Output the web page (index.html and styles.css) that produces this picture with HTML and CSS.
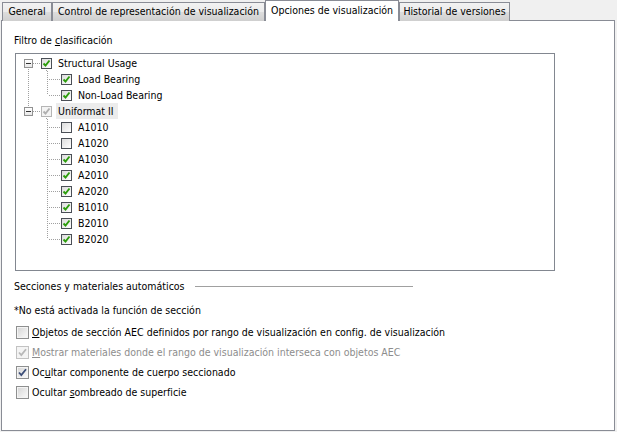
FILE: index.html
```html
<!DOCTYPE html>
<html lang="es">
<head>
<meta charset="utf-8">
<link rel="stylesheet" href="styles.css">
</head>
<body>
<div class="window">
  <div class="tabs">
    <div class="tab t-general">General</div>
    <div class="tab t-control">Control de representación de visualización</div>
    <div class="tab t-opciones active">Opciones de visualización</div>
    <div class="tab t-historial">Historial de versiones</div>
  </div>
  <div class="panel">
    <div class="caption">Filtro de <u>c</u>lasificación</div>
    <div class="tree">
      <div class="row root first">
        <span class="gutter"><span class="exp"></span></span>
        <span class="tcb on haskids"><svg viewBox="0 0 9 9"><path d="M1.5 4.5 L3.5 6.5 L7.5 1.5"/></svg></span>
        <span class="ttext">Structural Usage</span>
      </div>
      <div class="row child cont">
        <span class="gutter"></span>
        <span class="branch"></span>
        <span class="tcb on"><svg viewBox="0 0 9 9"><path d="M1.5 4.5 L3.5 6.5 L7.5 1.5"/></svg></span>
        <span class="ttext">Load Bearing</span>
      </div>
      <div class="row child cont last">
        <span class="gutter"></span>
        <span class="branch"></span>
        <span class="tcb on"><svg viewBox="0 0 9 9"><path d="M1.5 4.5 L3.5 6.5 L7.5 1.5"/></svg></span>
        <span class="ttext">Non-Load Bearing</span>
      </div>
      <div class="row root lastroot">
        <span class="gutter"><span class="exp"></span></span>
        <span class="tcb on dis haskids"><svg viewBox="0 0 9 9"><path d="M1.5 4.5 L3.5 6.5 L7.5 1.5"/></svg></span>
        <span class="ttext sel">Uniformat II</span>
      </div>
      <div class="row child">
        <span class="gutter"></span>
        <span class="branch"></span>
        <span class="tcb"></span>
        <span class="ttext">A1010</span>
      </div>
      <div class="row child">
        <span class="gutter"></span>
        <span class="branch"></span>
        <span class="tcb"></span>
        <span class="ttext">A1020</span>
      </div>
      <div class="row child">
        <span class="gutter"></span>
        <span class="branch"></span>
        <span class="tcb on"><svg viewBox="0 0 9 9"><path d="M1.5 4.5 L3.5 6.5 L7.5 1.5"/></svg></span>
        <span class="ttext">A1030</span>
      </div>
      <div class="row child">
        <span class="gutter"></span>
        <span class="branch"></span>
        <span class="tcb on"><svg viewBox="0 0 9 9"><path d="M1.5 4.5 L3.5 6.5 L7.5 1.5"/></svg></span>
        <span class="ttext">A2010</span>
      </div>
      <div class="row child">
        <span class="gutter"></span>
        <span class="branch"></span>
        <span class="tcb on"><svg viewBox="0 0 9 9"><path d="M1.5 4.5 L3.5 6.5 L7.5 1.5"/></svg></span>
        <span class="ttext">A2020</span>
      </div>
      <div class="row child">
        <span class="gutter"></span>
        <span class="branch"></span>
        <span class="tcb on"><svg viewBox="0 0 9 9"><path d="M1.5 4.5 L3.5 6.5 L7.5 1.5"/></svg></span>
        <span class="ttext">B1010</span>
      </div>
      <div class="row child">
        <span class="gutter"></span>
        <span class="branch"></span>
        <span class="tcb on"><svg viewBox="0 0 9 9"><path d="M1.5 4.5 L3.5 6.5 L7.5 1.5"/></svg></span>
        <span class="ttext">B2010</span>
      </div>
      <div class="row child last">
        <span class="gutter"></span>
        <span class="branch"></span>
        <span class="tcb on"><svg viewBox="0 0 9 9"><path d="M1.5 4.5 L3.5 6.5 L7.5 1.5"/></svg></span>
        <span class="ttext">B2020</span>
      </div>
    </div>

    <div class="group-title">
      <span>Secciones y materiales automáticos</span>
      <span class="rule"></span>
    </div>
    <div class="note">*No está activada la función de sección</div>

    <div class="check">
      <span class="cb"></span>
      <span class="ctext"><u>O</u>bjetos de sección AEC definidos por rango de visualización en config. de visualización</span>
    </div>
    <div class="check disabled">
      <span class="cb on"><svg viewBox="0 0 11 11"><path d="M2 5.5 L4.3 8 L9 2.2"/></svg></span>
      <span class="ctext"><u>M</u>ostrar materiales donde el rango de visualización interseca con objetos AEC</span>
    </div>
    <div class="check">
      <span class="cb on"><svg viewBox="0 0 11 11"><path d="M2 5.5 L4.3 8 L9 2.2"/></svg></span>
      <span class="ctext">Oc<u>u</u>ltar componente de cuerpo seccionado</span>
    </div>
    <div class="check">
      <span class="cb"></span>
      <span class="ctext">Ocultar <u>s</u>ombreado de superficie</span>
    </div>
  </div>
</div>
</body>
</html>
```

FILE: styles.css
```css
* { box-sizing: border-box; }
html, body { margin: 0; padding: 0; }
body {
  background: #f0f0f0;
  font-family: "DejaVu Sans Condensed", "Liberation Sans", sans-serif;
  font-size: 10.5px;
  color: #000;
  width: 617px;
  height: 432px;
  overflow: hidden;
}
u { text-decoration: underline; text-underline-offset: 1px; }

.window {
  display: flex;
  flex-direction: column;
  padding-left: 1px;
}

/* Tabs */
.tabs {
  display: flex;
  align-items: flex-end;
  height: 21px;
  padding-left: 1px;
  margin-bottom: -1px;
  position: relative;
  z-index: 1;
}
.tab {
  height: 19px;
  border: 1px solid #898c95;
  border-bottom: none;
  background: linear-gradient(#f2f2f2, #ebebeb 50%, #dddddd 51%, #cfcfcf);
  text-align: center;
  line-height: 17px;
  white-space: nowrap;
}
.tab.active {
  height: 21px;
  background: #fff;
  line-height: 18px;
}
.t-general { width: 50px; }
.t-control { width: 213px; }
.t-opciones { width: 134px; }
.t-historial { width: 111px; }

/* Panel */
.panel {
  width: 614px;
  height: 411px;
  background: #fff;
  border: 1px solid #898c95;
  padding: 12px 0 0 12px;
  display: flex;
  flex-direction: column;
}
.caption {
  line-height: 14px;
  height: 14px;
}

/* Tree */
.tree {
  margin-top: 6px;
  margin-left: 1px;
  width: 540px;
  height: 218px;
  border: 1px solid #828790;
  padding-top: 1px;
  display: flex;
  flex-direction: column;
}
.row {
  display: flex;
  align-items: center;
  height: 16px;
  position: relative;
}
.gutter {
  width: 25px;
  height: 16px;
  flex: none;
  position: relative;
}
.gutter::before {
  content: "";
  position: absolute;
  left: 12px;
  width: 1px;
  background: repeating-linear-gradient(to bottom, #a0a0a0 0 1px, transparent 1px 2px);
}
.root.first .gutter::before { top: 8px; bottom: 0; }
.root.lastroot .gutter::before { top: 0; height: 8px; }
.child.cont .gutter::before { top: 0; bottom: 0; }
.child:not(.cont) .gutter::before { display: none; }

.exp {
  position: absolute;
  left: 8px;
  top: 4px;
  width: 9px;
  height: 9px;
  border: 1px solid #919191;
  background: linear-gradient(#fff, #e8e8e8);
  z-index: 1;
}
.exp::before {
  content: "";
  position: absolute;
  left: 1px;
  top: 3px;
  width: 5px;
  height: 1px;
  background: #333;
}
.exp::after {
  content: "";
  position: absolute;
  left: 8px;
  top: 3px;
  width: 8px;
  height: 1px;
  background: repeating-linear-gradient(to right, #a0a0a0 0 1px, transparent 1px 2px);
}

.branch {
  width: 20px;
  height: 16px;
  flex: none;
  position: relative;
}
.branch::before {
  content: "";
  position: absolute;
  left: 6px;
  top: 0;
  bottom: 0;
  width: 1px;
  background: repeating-linear-gradient(to bottom, #a0a0a0 0 1px, transparent 1px 2px);
}
.child.last .branch::before { bottom: 8px; }
.branch::after {
  content: "";
  position: absolute;
  left: 7px;
  top: 8px;
  width: 12px;
  height: 1px;
  background: repeating-linear-gradient(to right, transparent 0 1px, #a0a0a0 1px 2px);
}

.tcb {
  width: 11px;
  height: 11px;
  flex: none;
  border: 1px solid #4a4f56;
  background: linear-gradient(135deg, #dcdcdc, #f4f4f4 70%, #fff);
  position: relative;
  display: flex;
  align-items: center;
  justify-content: center;
}
.tcb.haskids::after {
  content: "";
  position: absolute;
  left: 4px;
  top: 10px;
  width: 1px;
  height: 3px;
  background: repeating-linear-gradient(to bottom, transparent 0 1px, #a0a0a0 1px 2px);
}
.tcb svg { width: 9px; height: 9px; display: block; }
.tcb svg path { fill: none; stroke: #2c9d0c; stroke-width: 1.9; }
.tcb.dis { border-color: #b5b5b5; background: #f4f4f4; }
.tcb.dis svg path { stroke: #b0b0b0; }

.ttext {
  margin-left: 6px;
  line-height: 16px;
  white-space: nowrap;
}
.ttext.sel {
  margin-left: 4px;
  padding: 0 4px 0 2px;
  background: #ececec;
}
.child .ttext { margin-left: 6px; }

/* Bottom section */
.group-title {
  margin-top: 8px;
  display: flex;
  align-items: center;
  line-height: 14px;
  height: 14px;
}
.rule {
  width: 218px;
  height: 1px;
  background: #a0a0a0;
  margin-left: 10px;
}
.note {
  margin-top: 10px;
  line-height: 14px;
  height: 14px;
}
.note + .check { margin-top: 5px; }
.check {
  display: flex;
  align-items: center;
  height: 20px;
  margin-left: 2px;
}
.cb {
  width: 13px;
  height: 13px;
  flex: none;
  border: 1px solid #8e8f8f;
  background: linear-gradient(135deg, #d4d4d4, #f0f0f0 70%, #fafafa);
  box-shadow: inset 0 0 0 1px #f4f4f4;
  display: flex;
  align-items: center;
  justify-content: center;
}
.cb svg { width: 11px; height: 11px; display: block; }
.cb svg path { fill: none; stroke: #3c4e78; stroke-width: 1.8; }
.ctext {
  margin-left: 3px;
  white-space: nowrap;
}
.disabled .ctext { color: #8d8d8d; }
.disabled .cb { border-color: #c2c2c2; background: #f4f4f4; box-shadow: none; }
.disabled .cb svg path { stroke: #b8b8b8; }
```
